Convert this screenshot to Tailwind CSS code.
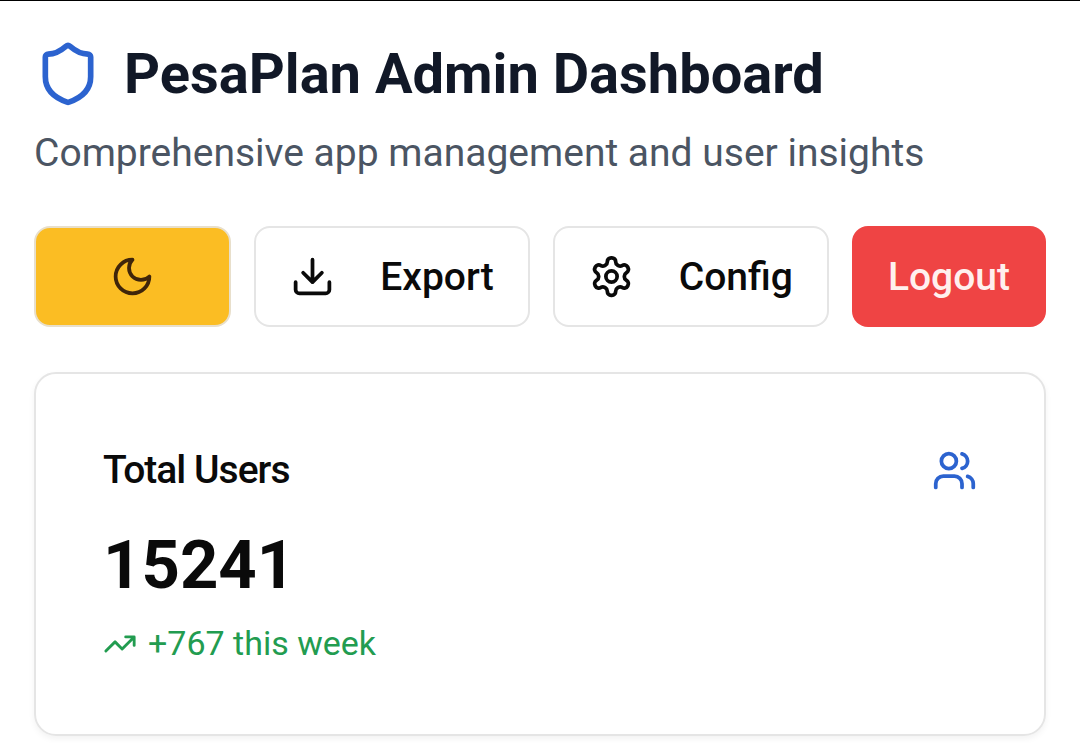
<!DOCTYPE html>
<html lang="en">
<head>
<meta charset="utf-8">
<meta name="viewport" content="width=device-width, initial-scale=1">
<title>PesaPlan Admin Dashboard</title>
<script src="https://cdn.jsdelivr.net/npm/@tailwindcss/browser@4"></script>
</head>
<body class="bg-white font-['Roboto',sans-serif] text-[#0a0a0a] border-t border-black">
<main class="px-[34px] pt-[37px] pb-[7px]">
  <header>
    <div class="flex items-center gap-[22px]">
      <svg class="size-[68px] shrink-0 text-[#2c63cf]" viewBox="0 0 24 24" fill="none" stroke="currentColor" stroke-width="2" stroke-linecap="round" stroke-linejoin="round" aria-hidden="true"><path d="M20 13c0 5-3.500 7.500-7.660 8.950a1 1 0 0 1-.67-.01C7.500 20.500 4 18 4 13V6a1 1 0 0 1 1-1c2 0 4.500-1.200 6.240-2.720a1.170 1.170 0 0 1 1.520 0C14.510 3.810 17 5 19 5a1 1 0 0 1 1 1z"/></svg>
      <h1 class="text-[56px] leading-[72px] font-bold text-[#111827]">PesaPlan Admin Dashboard</h1>
    </div>
    <p class="mt-[15px] text-[39px] leading-[56px] text-[#4b5563]">Comprehensive app management and user insights</p>
  </header>
  <div class="mt-[45px] flex gap-[23px] text-[39px] leading-[56px] font-medium">
    <button class="flex h-[101px] flex-1 items-center justify-center rounded-[16px] border-2 border-[#e8dfcb] bg-[#fbbd23]" aria-label="Toggle dark mode">
      <svg class="size-[45px]" viewBox="0 0 24 24" fill="none" stroke="#3f250a" stroke-width="2" stroke-linecap="round" stroke-linejoin="round" aria-hidden="true"><path d="M12 3a6 6 0 0 0 9 9 9 9 0 1 1-9-9Z"/></svg>
    </button>
    <button class="flex h-[101px] items-center gap-[45px] rounded-[16px] border-2 border-[#e5e5e5] px-[34px]">
      <svg class="size-[45px]" viewBox="0 0 24 24" fill="none" stroke="currentColor" stroke-width="2" stroke-linecap="round" stroke-linejoin="round" aria-hidden="true"><path d="M21 15v4a2 2 0 0 1-2 2H5a2 2 0 0 1-2-2v-4M7 10l5 5 5-5M12 15V3"/></svg>
      Export
    </button>
    <button class="flex h-[101px] items-center gap-[45px] rounded-[16px] border-2 border-[#e5e5e5] px-[34px]">
      <svg class="size-[45px]" viewBox="0 0 24 24" fill="none" stroke="currentColor" stroke-width="2" stroke-linecap="round" stroke-linejoin="round" aria-hidden="true"><path d="M12.220 2h-.44a2 2 0 0 0-2 2v.18a2 2 0 0 1-1 1.730l-.43.25a2 2 0 0 1-2 0l-.15-.08a2 2 0 0 0-2.730.73l-.22.38a2 2 0 0 0 .73 2.730l.15.1a2 2 0 0 1 1 1.720v.51a2 2 0 0 1-1 1.740l-.15.09a2 2 0 0 0-.73 2.730l.22.38a2 2 0 0 0 2.730.73l.15-.08a2 2 0 0 1 2 0l.43.25a2 2 0 0 1 1 1.730V20a2 2 0 0 0 2 2h.44a2 2 0 0 0 2-2v-.18a2 2 0 0 1 1-1.730l.43-.25a2 2 0 0 1 2 0l.15.08a2 2 0 0 0 2.730-.73l.22-.39a2 2 0 0 0-.73-2.730l-.15-.08a2 2 0 0 1-1-1.740v-.5a2 2 0 0 1 1-1.740l.15-.09a2 2 0 0 0 .73-2.730l-.22-.38a2 2 0 0 0-2.730-.73l-.15.08a2 2 0 0 1-2 0l-.43-.25a2 2 0 0 1-1-1.730V4a2 2 0 0 0-2-2z"/><circle cx="12" cy="12" r="3"/></svg>
      Config
    </button>
    <button class="h-[101px] rounded-[16px] bg-[#ef4444] px-9 text-[#fff0ee]">Logout</button>
  </div>
  <section class="mt-[45px] rounded-[22px] border-2 border-[#e5e5e5] px-[67px] pt-[68px] pb-[68px] shadow-[0_3px_6px_rgba(0,0,0,0.05)]">
    <div class="flex items-center justify-between">
      <h2 class="text-[39px] leading-[56px] font-medium tracking-tight">Total Users</h2>
      <svg class="size-[45px] text-[#2c63cf]" viewBox="0 0 24 24" fill="none" stroke="currentColor" stroke-width="2" stroke-linecap="round" stroke-linejoin="round" aria-hidden="true"><path d="M16 21v-2a4 4 0 0 0-4-4H6a4 4 0 0 0-4 4v2"/><circle cx="9" cy="7" r="4"/><path d="M22 21v-2a4 4 0 0 0-3-3.870M16 3.130a4 4 0 0 1 0 7.750"/></svg>
    </div>
    <div class="mt-[22px] text-[67px] leading-[90px] font-bold">15241</div>
    <p class="mt-[11px] flex items-center gap-[11px] text-[34px] leading-[45px] text-[#229c50]">
      <svg class="size-[34px]" viewBox="0 0 24 24" fill="none" stroke="currentColor" stroke-width="2" stroke-linecap="round" stroke-linejoin="round" aria-hidden="true"><path d="m22 7-8.500 8.500-5-5L2 17M16 7h6v6"/></svg>
      +767 this week
    </p>
  </section>
</main>
</body>
</html>
